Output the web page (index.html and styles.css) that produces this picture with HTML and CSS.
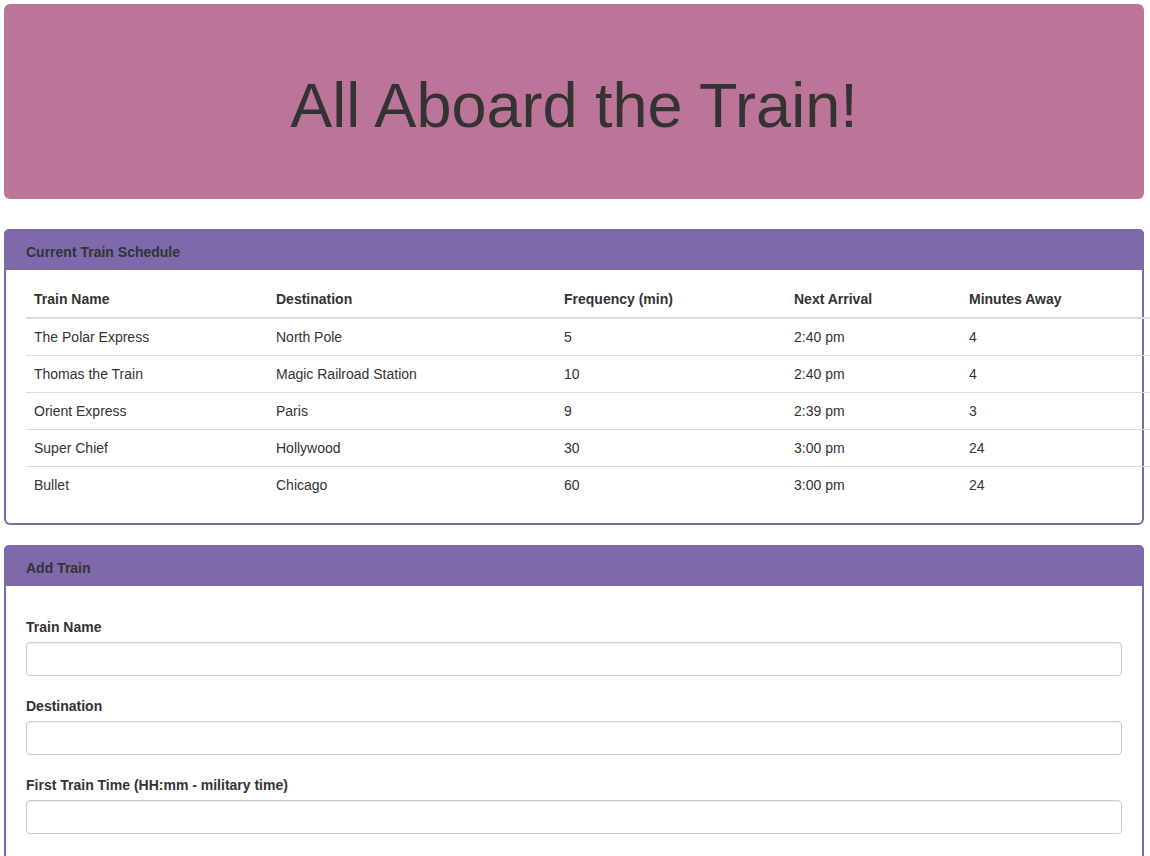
FILE: index.html
```html
<!DOCTYPE html>
<html>
<head>
<meta charset="utf-8">
<title>Train Scheduler</title>
<link rel="stylesheet" href="styles.css">
</head>
<body>
<div class="container">
  <div class="jumbotron">
    <h1>All Aboard the Train!</h1>
  </div>

  <div class="panel schedule">
    <div class="panel-heading">Current Train Schedule</div>
    <div class="panel-body">
      <table class="table">
        <colgroup>
          <col class="c1"><col class="c2"><col class="c3"><col class="c4"><col class="c5">
        </colgroup>
        <thead>
          <tr><th>Train Name</th><th>Destination</th><th>Frequency (min)</th><th>Next Arrival</th><th>Minutes Away</th></tr>
        </thead>
        <tbody>
          <tr><td>The Polar Express</td><td>North Pole</td><td>5</td><td>2:40 pm</td><td>4</td></tr>
          <tr><td>Thomas the Train</td><td>Magic Railroad Station</td><td>10</td><td>2:40 pm</td><td>4</td></tr>
          <tr><td>Orient Express</td><td>Paris</td><td>9</td><td>2:39 pm</td><td>3</td></tr>
          <tr><td>Super Chief</td><td>Hollywood</td><td>30</td><td>3:00 pm</td><td>24</td></tr>
          <tr><td>Bullet</td><td>Chicago</td><td>60</td><td>3:00 pm</td><td>24</td></tr>
        </tbody>
      </table>
    </div>
  </div>

  <div class="panel add">
    <div class="panel-heading">Add Train</div>
    <div class="panel-body form-body">
      <div class="form-group">
        <label>Train Name</label>
        <input type="text" class="form-control">
      </div>
      <div class="form-group">
        <label>Destination</label>
        <input type="text" class="form-control">
      </div>
      <div class="form-group">
        <label>First Train Time (HH:mm - military time)</label>
        <input type="text" class="form-control">
      </div>
    </div>
  </div>
</div>
</body>
</html>
```

FILE: styles.css
```css
* { box-sizing: border-box; }
html, body { margin: 0; padding: 0; overflow-x: hidden; }
body {
  font-family: "Liberation Sans", Arial, Helvetica, sans-serif;
  font-size: 14px;
  line-height: 20px;
  color: #333;
  background: #fff;
}
.container {
  padding: 4px 6px 0 4px;
}
.jumbotron {
  background: #bc7598;
  border-radius: 6px;
  height: 195px;
  display: flex;
  align-items: center;
  justify-content: center;
}
.jumbotron h1 {
  margin: 0;
  font-size: 63px;
  font-weight: 400;
  line-height: 70px;
  color: #333;
  padding-top: 7px;
}
.panel {
  border: 2px solid #7e69ab;
  border-radius: 6px;
  background: #fff;
}
.schedule { margin-top: 30px; }
.add { margin-top: 20px; }
.panel-heading {
  background: #7e69ab;
  color: #333;
  font-weight: 700;
  padding: 12px 22px 7px;
  margin: -2px -2px 0;
  border-radius: 5px 5px 0 0;
  height: 41px;
  display: flex;
  align-items: center;
}
.panel-body {
  padding: 11px 20px 20px;
}
.table {
  border-collapse: collapse;
  table-layout: fixed;
  width: calc(100% + 40px);
}
.c1 { width: 242px; }
.c2 { width: 288px; }
.c3 { width: 230px; }
.c4 { width: 175px; }
.table th, .table td {
  text-align: left;
  padding: 8px;
  line-height: 20px;
  white-space: nowrap;
}
.table th {
  font-weight: 700;
  border-bottom: 2px solid #ddd;
}
.table td {
  border-top: 1px solid #ddd;
}
.form-body {
  padding: 31px 20px 20px;
}
.form-group {
  margin-bottom: 20px;
}
.form-group label {
  display: block;
  font-weight: 700;
  margin-bottom: 5px;
}
.form-control {
  display: block;
  width: 100%;
  height: 34px;
  border: 1px solid #ccc;
  border-radius: 4px;
  background: #fff;
  box-shadow: inset 0 1px 1px rgba(0,0,0,.075);
  font: inherit;
  padding: 6px 12px;
}
```
